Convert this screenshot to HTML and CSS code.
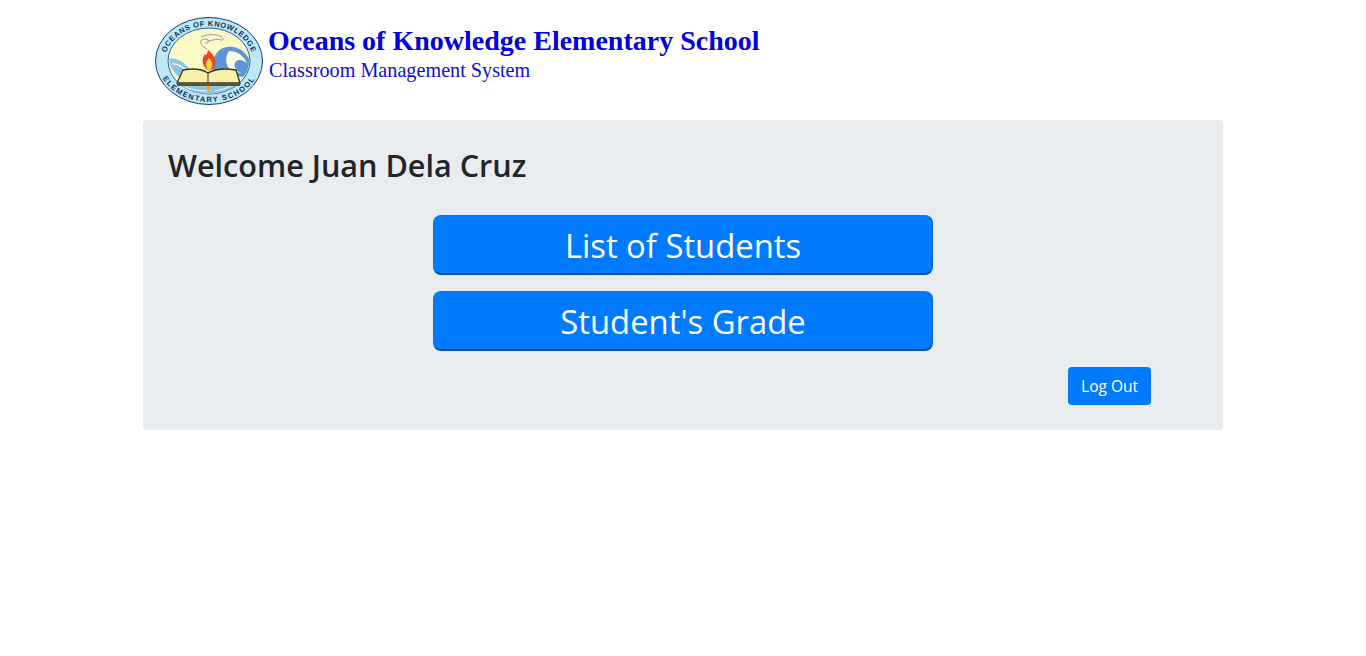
FILE: index.html
```html
<!DOCTYPE html>
<html lang="en">
<head>
    <meta charset="UTF-8">
    <meta name="viewport" content="width=device-width, initial-scale=1.0">
    <title>Classroom Management System</title>
    <link rel="stylesheet" href="styles.css">
</head>
<body>
    <div class="container">
        <div class="banner">
            <svg class="logo" viewBox="0 0 108 88" width="108" height="88">
                <defs>
                    <path id="ringTop" d="M10 44 A44 35 0 0 1 98 44"/>
                    <path id="ringBottom" d="M3 44 A51 41 0 0 0 105 44"/>
                </defs>
                <ellipse cx="54" cy="44" rx="53.5" ry="43.5" fill="#bde8f6" stroke="#123a78" stroke-width="1"/>
                <ellipse cx="54" cy="44" rx="41" ry="33" fill="#fdf8c8" stroke="#1d6aa0" stroke-width="1"/>
                <!-- left waves -->
                <path d="M14 42 C22 40 30 46 36 54 L24 60 C19 56 15 50 14 42 Z" fill="#8cc4e4"/>
                <path d="M17 47 C23 46 28 50 32 54" fill="none" stroke="#fff" stroke-width="1.2"/>
                <!-- big wave -->
                <path d="M56 50 C58 38 64 31 72 30 C82 29 90 34 94 42 C94 50 92 56 88 60 L60 56 Z" fill="#5f94d6"/>
                <path d="M74 34 C82 34 88 38 92 46 C86 42 82 42 80 46 C78 50 82 54 86 56 L76 54 C70 48 70 40 74 34 Z" fill="#fdf8e0"/>
                <!-- water below the book -->
                <path d="M22 66 C32 74 44 77 54 77 C66 77 78 72 86 64 L80 62 L28 62 Z" fill="#8cc4e4"/>
                <path d="M30 70 C38 73 46 74 52 74 M60 74 C66 73 72 71 78 68" fill="none" stroke="#fff" stroke-width="1"/>
                <!-- smoke -->
                <path d="M52 32 C44 28 44 22 50 22 C56 22 54 27 50 26 M52 24 C58 24 60 21 66 23 C70 24 68 19 62 18 C56 17 50 18 46 20" fill="none" stroke="#8d9aa8" stroke-width="1"/>
                <!-- flame -->
                <path d="M54 54 C47 50 46 42 50 37 C51 39 52 38 53 33 C57 36 62 42 60 48 C59 51 57 53 54 54 Z" fill="#e4492a"/>
                <path d="M54 54 C50 50 50 45 54 41 C58 45 59 50 54 54 Z" fill="#f9d14c"/>
                <!-- book -->
                <path d="M28 53 C38 51 47 52 53 56 C60 52 70 51 81 53 L85 66 L22 66 Z" fill="#f6f0a8" stroke="#3a3520" stroke-width="1.4"/>
                <path d="M22 66 L85 66 L85 69 L22 69 Z" fill="#5a5330"/>
                <path d="M53 56 L53 66" stroke="#3a3520" stroke-width="1"/>
                <path d="M51 69 L56 69 L53.5 76 Z" fill="#e0a83c"/>
                <text class="ring-text"><textPath href="#ringTop" startOffset="50%" text-anchor="middle">OCEANS OF KNOWLEDGE</textPath></text>
                <text class="ring-text ring-text-wide"><textPath href="#ringBottom" startOffset="50%" text-anchor="middle">ELEMENTARY SCHOOL</textPath></text>
            </svg>
            <div class="school">
                <div class="school-name">Oceans of Knowledge Elementary School</div>
                <div class="school-sub">Classroom Management System</div>
            </div>
        </div>

        <div class="jumbotron">
            <h2>Welcome Juan Dela Cruz</h2>
            <div class="menu">
                <a class="menu-btn" href="#">List of Students</a>
                <a class="menu-btn" href="#">Student's Grade</a>
            </div>
            <div class="actions">
                <a class="logout" href="#">Log Out</a>
            </div>
        </div>
    </div>
</body>
</html>
```

FILE: styles.css
```css
body {
    font-family: "Open Sans", "Noto Sans", sans-serif;
    background-color: #fff;
    color: #212529;
    margin: 0;
}
.container {
    width: 1080px;
    margin: 0 auto;
}
.banner {
    display: flex;
    align-items: flex-start;
    height: 120px;
    padding: 17px 0 0 12px;
    box-sizing: border-box;
}
.logo {
    flex: none;
    display: block;
}
.ring-text {
    font-family: "Liberation Sans", sans-serif;
    font-size: 7.5px;
    font-weight: bold;
    letter-spacing: 0.6px;
    fill: #10305c;
}
.ring-text-wide {
    letter-spacing: 1.4px;
}
.school {
    margin-left: 5px;
    color: #0000dd;
    font-family: "Liberation Serif", serif;
}
.school-name {
    font-size: 28px;
    font-weight: bold;
    line-height: 32px;
    margin-top: 8px;
}
.school-sub {
    font-size: 20.2px;
    line-height: 24px;
    margin: 1px 0 0 1px;
    color: #1010c8;
}
.jumbotron {
    background-color: #e9ecef;
    border-radius: 4px;
    height: 310px;
    box-sizing: border-box;
    padding: 24px 72px 0 25px;
}
h2 {
    font-size: 30.6px;
    font-weight: 600;
    line-height: 42px;
    margin: 0 0 29px;
}
.menu {
    display: flex;
    flex-direction: column;
    align-items: center;
    gap: 16px;
    margin-right: -47px;
}
.menu-btn {
    display: block;
    width: 500px;
    height: 60px;
    box-sizing: border-box;
    background-color: #007bff;
    border-radius: 8px;
    border: 1px solid #007bff;
    border-right-color: #0062cc;
    border-bottom: 2px solid #00509f;
    color: #fff;
    font-size: 32.8px;
    line-height: 59px;
    text-align: center;
    text-decoration: none;
}
.actions {
    display: flex;
    justify-content: flex-end;
    margin-top: 16px;
}
.logout {
    display: block;
    background-color: #007bff;
    border-radius: 4px;
    color: #fff;
    font-size: 15.5px;
    line-height: 38px;
    height: 38px;
    padding: 0 13px;
    text-decoration: none;
}
```
